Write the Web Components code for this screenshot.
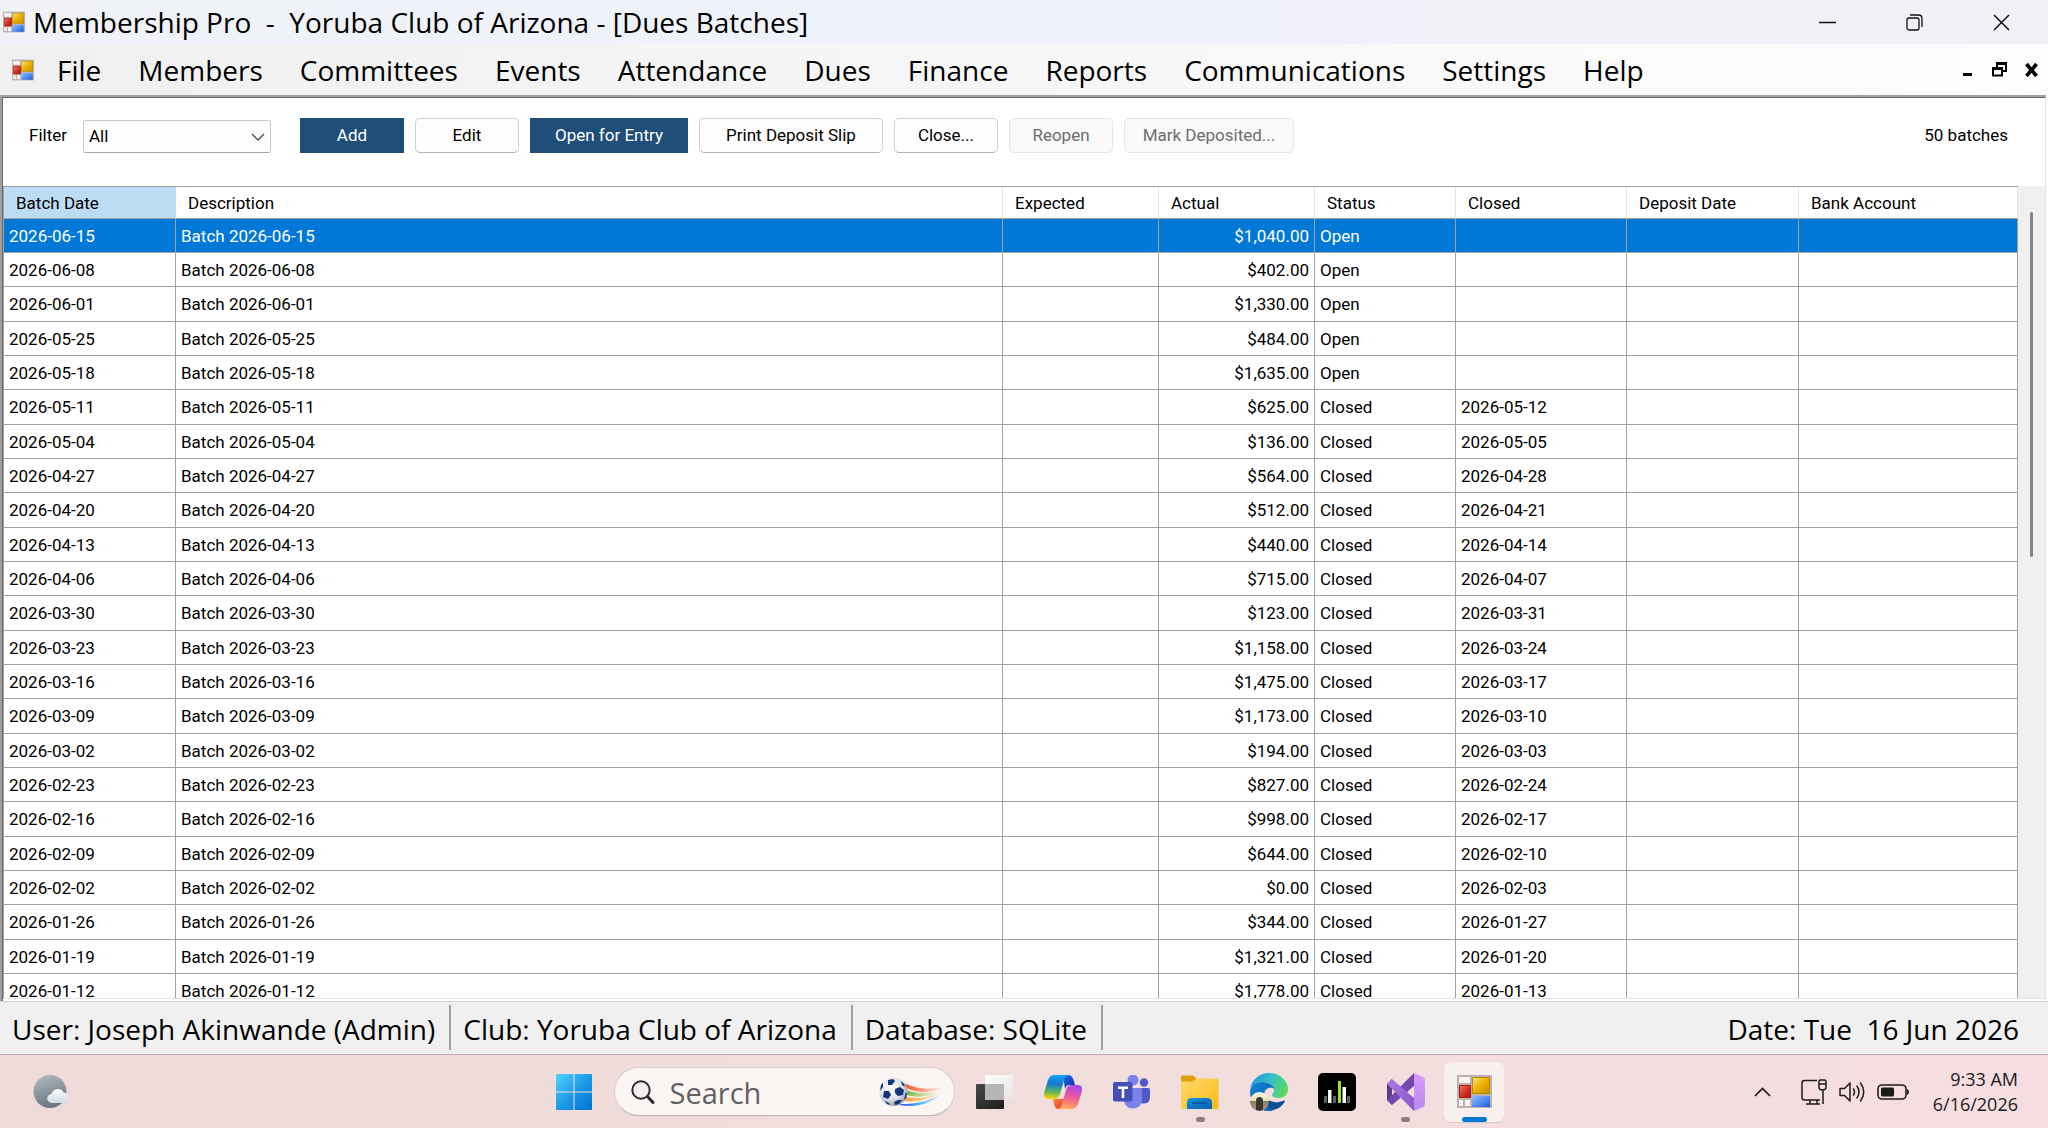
<!DOCTYPE html>
<html lang="en">
<head>
<meta charset="utf-8">
<title>Membership Pro - Dues Batches</title>
<style>
  html, body { height: 100%; margin: 0; }
  body {
    --ui: "Open Sans", "Noto Sans", sans-serif;
    --grid: "Roboto", sans-serif;
    font-family: var(--ui);
    color: #000;
    overflow: hidden;
  }
</style>
</head>
<body>
<desktop-screen>
  <title-bar>Membership Pro&nbsp; -&nbsp; Yoruba Club of Arizona - [Dues Batches]</title-bar>
  <menu-bar items="File,Members,Committees,Events,Attendance,Dues,Finance,Reports,Communications,Settings,Help"></menu-bar>
  <mdi-child>
    <batch-toolbar slot="toolbar" count="50"></batch-toolbar>
    <batch-grid></batch-grid>
  </mdi-child>
  <status-bar>
    <span>User: Joseph Akinwande (Admin)</span>
    <span>Club: Yoruba Club of Arizona</span>
    <span>Database: SQLite</span>
    <span slot="end">Date: Tue&nbsp; 16 Jun 2026</span>
  </status-bar>
  <task-bar></task-bar>
</desktop-screen>

<script>
const BATCHES = [
  ['2026-06-15', '$1,040.00', 'Open', ''],
  ['2026-06-08', '$402.00', 'Open', ''],
  ['2026-06-01', '$1,330.00', 'Open', ''],
  ['2026-05-25', '$484.00', 'Open', ''],
  ['2026-05-18', '$1,635.00', 'Open', ''],
  ['2026-05-11', '$625.00', 'Closed', '2026-05-12'],
  ['2026-05-04', '$136.00', 'Closed', '2026-05-05'],
  ['2026-04-27', '$564.00', 'Closed', '2026-04-28'],
  ['2026-04-20', '$512.00', 'Closed', '2026-04-21'],
  ['2026-04-13', '$440.00', 'Closed', '2026-04-14'],
  ['2026-04-06', '$715.00', 'Closed', '2026-04-07'],
  ['2026-03-30', '$123.00', 'Closed', '2026-03-31'],
  ['2026-03-23', '$1,158.00', 'Closed', '2026-03-24'],
  ['2026-03-16', '$1,475.00', 'Closed', '2026-03-17'],
  ['2026-03-09', '$1,173.00', 'Closed', '2026-03-10'],
  ['2026-03-02', '$194.00', 'Closed', '2026-03-03'],
  ['2026-02-23', '$827.00', 'Closed', '2026-02-24'],
  ['2026-02-16', '$998.00', 'Closed', '2026-02-17'],
  ['2026-02-09', '$644.00', 'Closed', '2026-02-10'],
  ['2026-02-02', '$0.00', 'Closed', '2026-02-03'],
  ['2026-01-26', '$344.00', 'Closed', '2026-01-27'],
  ['2026-01-19', '$1,321.00', 'Closed', '2026-01-20'],
  ['2026-01-12', '$1,778.00', 'Closed', '2026-01-13'],
];

// every element renders once from a string
class BaseElement extends HTMLElement {
  constructor() {
    super();
    this.attachShadow({ mode: 'open' });
  }
  connectedCallback() {
    if (this.rendered) return;
    const template = document.createElement('template');
    template.innerHTML = this.render();
    this.shadowRoot.appendChild(template.content.cloneNode(true));
    this.rendered = true;
  }
}

class DesktopScreen extends BaseElement {
  render() {
    return `<style>
      :host { display: flex; flex-direction: column; height: 100vh; }
      ::slotted(mdi-child) { flex: 1; min-height: 0; }
    </style><slot></slot>`;
  }
}

// all icons live here, sized by the width/height of the host
const ICONS = {
  forms: `<svg viewBox="0 0 35 33">
    <defs>
      <linearGradient id="y" x1="0" y1="0" x2="1" y2="1"><stop offset="0" stop-color="#fbe98a"/><stop offset=".5" stop-color="#eeb000"/><stop offset="1" stop-color="#c98c00"/></linearGradient>
      <linearGradient id="r" x1="0" y1="0" x2="1" y2="1"><stop offset="0" stop-color="#f0806e"/><stop offset=".6" stop-color="#cc2a1c"/><stop offset="1" stop-color="#a31812"/></linearGradient>
      <linearGradient id="b" x1="0" y1="0" x2="1" y2="1"><stop offset="0" stop-color="#94bcff"/><stop offset=".6" stop-color="#4a86f2"/><stop offset="1" stop-color="#2258c8"/></linearGradient>
    </defs>
    <path d="M0 0h35v33H0z" fill="#b8b2b2"/>
    <path d="M2 2h11v6H2zM2 25h4v6H2zM8 25h5v6H8z" fill="#fbf3f2"/>
    <path d="M2 10h12v13H2z" fill="url(#r)"/><path d="M2.500 10.500h11v12h-11z" fill="none" stroke="#b01c12"/>
    <path d="M15 2h18v17H15z" fill="url(#y)"/><path d="M15.500 2.500h17v16h-17z" fill="none" stroke="#b98700"/>
    <path d="M15 21h18v11H15z" fill="url(#b)"/>
  </svg>`,
  weather: `<svg viewBox="0 0 36 33">
    <defs><linearGradient id="m" x1="0" y1="0" x2=".3" y2="1"><stop offset="0" stop-color="#b4bcc4"/><stop offset="1" stop-color="#6d7881"/></linearGradient>
    <linearGradient id="c" x1="0" y1="0" x2="0" y2="1"><stop offset="0" stop-color="#fff"/><stop offset="1" stop-color="#cfd8e2"/></linearGradient></defs>
    <ellipse cx="17" cy="16.500" rx="16.500" ry="16.500" fill="url(#m)"/>
    <path d="M19 28a4.500 4.500 0 0 1-.5-9 6.500 6.500 0 0 1 12-1.500A5.300 5.300 0 0 1 31 28z" fill="url(#c)"/>
  </svg>`,
  start: `<svg viewBox="0 0 36 36">
    <defs><linearGradient id="w" x1="0" y1="0" x2="36" y2="36" gradientUnits="userSpaceOnUse"><stop offset="0" stop-color="#52d3ff"/><stop offset=".5" stop-color="#1d9ce6"/><stop offset="1" stop-color="#0070d0"/></linearGradient></defs>
    <path d="M1 0h16.500v17.500H0V1a1 1 0 0 1 1-1zM18.500 0H35a1 1 0 0 1 1 1v16.500H18.500zM0 18.500h17.500V36H1a1 1 0 0 1-1-1zM18.500 18.500H36V35a1 1 0 0 1-1 1H18.500z" fill="url(#w)"/>
  </svg>`,
  search: `<svg viewBox="0 0 24 24" fill="none" stroke="#2b2b2b" stroke-linecap="round">
    <circle cx="10" cy="10" r="8.700" stroke-width="2" fill="#f0eeee"/><path d="M16.500 16.500l5.500 6" stroke-width="3"/>
  </svg>`,
  ball: `<svg viewBox="0 0 66 28">
    <defs>
      <radialGradient id="s" cx=".4" cy=".35" r=".7"><stop offset="0" stop-color="#fff"/><stop offset=".6" stop-color="#dcdfe4"/><stop offset="1" stop-color="#8d95a3"/></radialGradient>
      <linearGradient id="t1"><stop offset="0" stop-color="#f4511e"/><stop offset="1" stop-color="#f4511e" stop-opacity="0"/></linearGradient>
      <linearGradient id="t2"><stop offset="0" stop-color="#6cb33f"/><stop offset="1" stop-color="#b8dc5a" stop-opacity="0"/></linearGradient>
      <linearGradient id="t3"><stop offset="0" stop-color="#ff9d3c"/><stop offset="1" stop-color="#ffb74d" stop-opacity="0"/></linearGradient>
      <linearGradient id="t4"><stop offset="0" stop-color="#3949db"/><stop offset=".5" stop-color="#4ab8f5"/><stop offset="1" stop-color="#4fc3f7" stop-opacity="0"/></linearGradient>
    </defs>
    <path d="M25 5c12 6 24 7 40 4-14 7-26 6-38 1z" fill="url(#t1)"/>
    <path d="M27 12c12 4 24 4 36 0-12 7-24 8-35 5z" fill="url(#t2)"/>
    <path d="M27 19c14 2 25 0 37-7-11 9-23 13-38 11z" fill="url(#t3)"/>
    <path d="M22 26c16 0 28-2 42-12-12 12-26 16-44 13z" fill="url(#t4)"/>
    <circle cx="14.500" cy="14" r="14" fill="url(#s)"/>
    <path d="M16 11l5-2 4 3-1 5-5 1-3-3zM5 13l5 0 2 4-3 4-5-2zM9 2l5-1 2 2-3 4-4 0zM2 7l2-2 0 4-3 4zM15 24l4-2 4 0-3 4-4 1zM22 3l3 3 1 3-3-2zM27 14l1 2-1 4-2 2zM6 23l4 2 1 2-3-1z" fill="#12357a"/>
  </svg>`,
  taskview: `<svg viewBox="0 0 38 34">
    <defs><linearGradient id="d" x1="0" y1="0" x2="1" y2="1"><stop offset="0" stop-color="#484848"/><stop offset="1" stop-color="#1c1c1c"/></linearGradient>
    <linearGradient id="e" x1="0" y1="0" x2="1" y2="1"><stop offset="0" stop-color="#fff"/><stop offset="1" stop-color="#e6e3e3"/></linearGradient></defs>
    <rect y="9" width="28" height="25" rx="1" fill="url(#d)"/><rect x="9" width="28" height="25" rx="1" fill="url(#e)"/><path d="M9 9h19v16H9z" fill="#b5b5b5"/>
  </svg>`,
  copilot: `<svg viewBox="0 0 38 34">
    <defs>
      <linearGradient id="p1" x1=".4" y1="0" x2=".3" y2="1"><stop offset="0" stop-color="#11a5f0"/><stop offset=".35" stop-color="#1478d6"/><stop offset=".65" stop-color="#48b06a"/><stop offset="1" stop-color="#ffd400"/></linearGradient>
      <linearGradient id="p2" x1=".6" y1="0" x2=".4" y2="1"><stop offset="0" stop-color="#a54be8"/><stop offset=".5" stop-color="#f0589a"/><stop offset="1" stop-color="#ffac5c"/></linearGradient>
      <linearGradient id="p3" x1="0" y1="0" x2="1" y2="1"><stop offset="0" stop-color="#1b6fe0"/><stop offset="1" stop-color="#0a2fae"/></linearGradient>
      <linearGradient id="p4" x1="0" y1="0" x2="1" y2="1"><stop offset="0" stop-color="#ff8a3c"/><stop offset="1" stop-color="#e8352c"/></linearGradient>
    </defs>
    <path d="M19 0h5q4 0 5.500 5l1.500 5h-5q-4 0-5 4z" fill="url(#p3)"/>
    <path d="M9 24h11l-2 6q-1 4-4 4-3 0-4-5z" fill="url(#p4)"/>
    <path d="M10 0h14q-3 1-4 5l-4 14q-1.500 5-6 5H4q-5 0-4-6L4 5q2-5 6-5z" fill="url(#p1)"/>
    <path d="M28 34H14q3-1 4-5l4-14q1.500-5 6-5h6q5 0 4 6l-4 13q-2 5-6 5z" fill="url(#p2)"/>
  </svg>`,
  teams: `<svg viewBox="0 0 38 34">
    <circle cx="20" cy="5" r="5.500" fill="#7b83eb"/><circle cx="31" cy="7.500" r="4.200" fill="#5059c9"/>
    <path d="M27 13h8.500q1.500 0 1.500 1.500V22q0 6.500-6 6.500-4 0-5-2z" fill="#5059c9"/>
    <path d="M11 13h16q2 0 2 2v9q0 9-9 9.500-7 0-9-7z" fill="#7b83eb"/>
    <rect y="7" width="19.500" height="19.500" rx="2" fill="#464eb8"/><path d="M5 11.500h10V14h-3.700v9H8.700v-9H5z" fill="#fff"/>
  </svg>`,
  folder: `<svg viewBox="0 0 38 34">
    <defs><linearGradient id="f" x1="0" y1="0" x2="1" y2="1"><stop offset="0" stop-color="#ffdb6e"/><stop offset="1" stop-color="#fbb914"/></linearGradient>
    <linearGradient id="g" x1="0" y1="0" x2="1" y2="1"><stop offset="0" stop-color="#1590dc"/><stop offset="1" stop-color="#0562b0"/></linearGradient></defs>
    <path d="M0 2q0-1.500 1.500-1.500H12l4 3.500-4 4H0z" fill="#e0a005"/>
    <path d="M0 6.500h11.500L16 3.500h20q1.500 0 1.500 1.500v27.500Q37.500 34 36 34H1.500Q0 34 0 32.500z" fill="url(#f)"/>
    <path d="M6 34v-6q0-5 5-5h15q5 0 5 5v6z" fill="url(#g)"/><path d="M11.500 28h14" stroke="#043f78" stroke-width="1.200" stroke-linecap="round"/>
  </svg>`,
  edge: `<svg viewBox="0 0 38 38">
    <defs>
      <linearGradient id="e1" x1="0" y1=".3" x2="1" y2=".6"><stop offset="0" stop-color="#1c9ad8"/><stop offset=".5" stop-color="#35c1c8"/><stop offset="1" stop-color="#5fdc5a"/></linearGradient>
      <linearGradient id="e2" x1="0" y1="0" x2="1" y2="1"><stop offset="0" stop-color="#1284d6"/><stop offset="1" stop-color="#0b5aa8"/></linearGradient>
      <linearGradient id="e3" x1="0" y1="0" x2="0" y2="1"><stop offset="0" stop-color="#fffbe0"/><stop offset=".45" stop-color="#e8dfb8"/><stop offset=".5" stop-color="#8f7f60"/><stop offset="1" stop-color="#a89a86"/></linearGradient>
    </defs>
    <path d="M0 16C2 6 10 0 19 0c11 0 19 8 19 16 0 6-4 9-9 9-4 0-7-1-7-3 0-1 2-2 2-5 0-4-5-8-11-8-7 0-12 4-13 7z" fill="url(#e1)"/>
    <path d="M0 18c1-6 6-9 12-9 7 0 12 4 12 7-3-3-10-1-10 6 0 7 6 12 14 12-3 3-6 4-9 4C8 38 0 30 0 18z" fill="url(#e2)"/>
    <path d="M15 20c0 7 7 10 14 9 3-.5 5-1.500 6-1 0 1-3 5-7 7.500-9 3-15-5-13-15.500z" fill="#0d4f96"/>
    <circle cx="9.500" cy="28.500" r="9.500" fill="url(#e3)"/><path d="M6 37v-9q0-4 3.500-4t3.500 4v9q-3.500 1.500-7 0z" fill="#3b3631"/>
  </svg>`,
  bars: `<svg viewBox="0 0 38 38">
    <rect width="38" height="38" rx="5" fill="#000"/>
    <path d="M6 23h3v7H6zM15 23h3v7h-3zM29 23h3v7h-3z" fill="#5e5e5e"/><path d="M10 17h3.500v13H10zM24.500 14H28v16h-3.500z" fill="#fff"/><path d="M20 8h3v22h-3z" fill="#9be22d"/>
  </svg>`,
  vs: `<svg viewBox="0 0 38 38">
    <defs><linearGradient id="v" x1="0" y1="0" x2="1" y2="1"><stop offset="0" stop-color="#b07be6"/><stop offset="1" stop-color="#8a55c9"/></linearGradient>
    <linearGradient id="v2" x1="0" y1="0" x2="0" y2="1"><stop offset="0" stop-color="#d79bff"/><stop offset="1" stop-color="#b98aee"/></linearGradient></defs>
    <path d="M0 11l5-5v26l-5-5z" fill="#5c3a86"/>
    <path d="M5 32l-5-5 22-22L27 0v13z" fill="#7448b0"/>
    <path d="M0 11l5-5 22 19v13l-5-5z" fill="url(#v)"/>
    <path d="M27 0l9 4q2 1 2 3v24q0 2-2 3l-9 4z" fill="url(#v2)"/>
  </svg>`,
  min: `<svg viewBox="0 0 17 17"><path d="M0 8.500h17" stroke="#111" stroke-width="1.500"/></svg>`,
  restore: `<svg viewBox="0 0 17 17" fill="none" stroke="#111" stroke-width="1.300"><rect x="1" y="4" width="12" height="12" rx="2"/><path d="M4 1h8.500Q16 1 16 4.500V13"/></svg>`,
  close: `<svg viewBox="0 0 17 17"><path d="M1 1l15 15M16 1L1 16" stroke="#111" stroke-width="1.500"/></svg>`,
  mdimin: `<svg viewBox="0 0 15 15"><path d="M3 11h9v3H3z"/></svg>`,
  mdirestore: `<svg viewBox="0 0 15 15"><path d="M4 0h11v10h-4v4.500H0V5h4zM6 3v2h5v3h2V3zM2 8v4.500h7V8z" fill-rule="evenodd"/></svg>`,
  mdiclose: `<svg viewBox="0 0 15 15"><path d="M2.500 2l10 12M12.500 2l-10 12" stroke="#000" stroke-width="3.600"/></svg>`,
  up: `<svg viewBox="0 0 17 10" fill="none"><path d="M1 9l7.500-7.500L16 9" stroke="#1b1b1b" stroke-width="1.700"/></svg>`,
  down: `<svg viewBox="0 0 14 8" fill="none"><path d="M1 1l6 6 6-6" stroke="#555" stroke-width="1.500"/></svg>`,
  network: `<svg viewBox="0 0 26 26" fill="none" stroke="#1b1b1b" stroke-width="1.500"><path d="M16 1.500H3.500Q1 1.500 1 4v14.500Q1 21 3.500 21H19M9 21v4M16 21v4M5 25h14M22 11v14M18 2.500Q18 1 19.500 1h4Q25 1 25 2.500V8q0 3-3.500 3T18 8zM18 5h7"/></svg>`,
  sound: `<svg viewBox="0 0 26 22" fill="none" stroke="#1b1b1b" stroke-width="1.500" stroke-linecap="round" stroke-linejoin="round"><path d="M1 7.500h4.500L11 2v18l-5.500-5.500H1zM14.500 8q2 3 0 6M18 5q4 6 0 12M21.500 2q6.500 9 0 18"/></svg>`,
  battery: `<svg viewBox="0 0 32 16" fill="none"><rect x="1" y="1" width="28" height="14" rx="4" stroke="#1b1b1b" stroke-width="1.600"/><rect x="4" y="3.500" width="13" height="9" rx="1.500" fill="#1b1b1b"/><path d="M30 5q2 1 2 3t-2 3z" fill="#1b1b1b"/></svg>`,
};

class UiIcon extends BaseElement {
  render() {
    return `<style>
      :host { display: inline-block; flex: none; }
      svg { display: block; width: 100%; height: 100%; }
    </style>${ICONS[this.getAttribute('name')]}`;
  }
}

class TitleBar extends BaseElement {
  render() {
    return `<style>
      :host { display: flex; align-items: center; height: 44px; flex: none; background: linear-gradient(90deg, #f0f2f8, #eff2fa 50%, #f4f0f7); }
      .app { width: 22px; height: 22px; margin: 0 8px 0 3px; }
      h1 { flex: 1; margin: 0; font-size: 28px; font-weight: 400; line-height: 44px; white-space: nowrap; }
      button { width: 87px; height: 42px; padding: 0; border: 0; background: none; display: grid; place-items: center; }
      button ui-icon { width: 17px; height: 17px; }
      .buttons { display: flex; margin-right: 3px; }
    </style>
    <ui-icon class="app" name="forms"></ui-icon>
    <h1><slot></slot></h1>
    <div class="buttons">
      <button aria-label="Minimize"><ui-icon name="min"></ui-icon></button>
      <button aria-label="Restore"><ui-icon name="restore"></ui-icon></button>
      <button aria-label="Close"><ui-icon name="close"></ui-icon></button>
    </div>`;
  }
}

class MenuBar extends BaseElement {
  render() {
    const items = this.getAttribute('items').split(',').map((name) => `<button>${name}</button>`).join('');
    return `<style>
      :host { display: flex; align-items: center; height: 51px; flex: none; background: linear-gradient(90deg, #f0f0f0, #fdfdfd); }
      .app { width: 22px; height: 22px; margin-left: 12px; }
      nav { display: flex; gap: 1px; flex: 1; margin-left: 5px; }
      nav button { border: 0; background: none; padding: 2px 18px 0; font: 28px/49px var(--ui); color: inherit; }
      .mdi { display: flex; margin-right: 1px; }
      .mdi button { width: 32px; height: 32px; padding: 0; border: 0; background: none; display: grid; place-items: center; }
      .mdi ui-icon { width: 15px; height: 15px; }
    </style>
    <ui-icon class="app" name="forms"></ui-icon>
    <nav>${items}</nav>
    <div class="mdi">
      <button aria-label="Minimize child"><ui-icon name="mdimin"></ui-icon></button>
      <button aria-label="Restore child"><ui-icon name="mdirestore"></ui-icon></button>
      <button aria-label="Close child"><ui-icon name="mdiclose"></ui-icon></button>
    </div>`;
  }
}

class MdiChild extends BaseElement {
  render() {
    return `<style>
      :host { display: flex; flex-direction: column; box-sizing: border-box; margin-right: 2px; border: solid #a0a0a0; border-width: 2px 0 0 2px; }
      .client { flex: 1; min-height: 0; display: flex; flex-direction: column; border: solid #696969; border-width: 1px 0 0 1px; border-right: 1px solid #e3e3e3; background: #fff; }
      ::slotted(batch-grid) { flex: 1; min-height: 0; }
    </style>
    <div class="client"><slot name="toolbar"></slot><slot></slot></div>`;
  }
}

class BatchToolbar extends BaseElement {
  render() {
    return `<style>
      :host { display: flex; align-items: flex-start; gap: 11px; padding: 20px 37px 33px 26px; font: 17px/35px var(--grid); }
      .filter { display: flex; width: 260px; height: 35px; }
      label { width: 54px; }
      .combo { display: grid; align-self: flex-end; width: 188px; height: 33px; align-items: center; }
      select, .combo ui-icon { grid-area: 1 / 1; }
      select { appearance: none; width: 100%; height: 33px; padding: 0 5px; border: 1px solid #c9c9c9; border-bottom-color: #a8a8a8; border-radius: 3px; background: #fdfdfd; font: inherit; line-height: 31px; color: #000; }
      .combo ui-icon { justify-self: end; width: 14px; height: 8px; margin-right: 6px; pointer-events: none; }
      button { box-sizing: border-box; width: 104px; height: 35px; padding: 0; border: 1px solid #d0d0d0; border-bottom-color: #b4b4b4; border-radius: 5px; background: #fdfdfd; font: inherit; line-height: 33px; color: #000; }
      .primary { border: 0; border-radius: 0; background: #1f4e79; color: #fff; line-height: 35px; }
      button:disabled { border-color: #e5e5e5; background: #f9f9f9; color: #6d6d6d; }
      .open { width: 158px; }
      .print { width: 184px; }
      .mark { width: 170px; }
      output { margin-left: auto; }
    </style>
    <div class="filter">
      <label for="filter">Filter</label>
      <div class="combo"><select id="filter"><option>All</option></select><ui-icon name="down"></ui-icon></div>
    </div>
    <button class="primary">Add</button>
    <button>Edit</button>
    <button class="primary open">Open for Entry</button>
    <button class="print">Print Deposit Slip</button>
    <button>Close...</button>
    <button disabled>Reopen</button>
    <button class="mark" disabled>Mark Deposited...</button>
    <output>${this.getAttribute('count')} batches</output>`;
  }
}

class BatchGrid extends BaseElement {
  getRows() {
    return BATCHES.map(([date, actual, status, closed], i) => `<tr${i === 0 ? ' class="selected"' : ''}>
      <td>${date}</td><td>Batch ${date}</td><td></td><td class="money">${actual}</td><td>${status}</td><td>${closed}</td><td></td><td></td>
    </tr>`).join('');
  }
  render() {
    return `<style>
      :host { display: flex; overflow: hidden; font: 17px/20px var(--grid); border-bottom: 1px solid #e3e3e3; margin-bottom: 2px; }
      .view { flex: 1; overflow: hidden; border: solid #a0a0a0; border-width: 1px 0 0 1px; }
      table { width: 100%; border-collapse: separate; border-spacing: 0; table-layout: fixed; }
      th, td { box-sizing: border-box; padding: 0 5px; text-align: left; font-weight: 400; white-space: nowrap; border-right: 1px solid #a0a0a0; border-bottom: 1px solid #a0a0a0; }
      th { height: 32px; padding: 0 12px; border-right-color: #e5e5e5; }
      th.sorted { background: #bcdcf4; border-right-color: #bcdcf4; }
      tbody tr { height: 34px; }
      /* row pitch is 34 and a third */
      tbody tr:nth-child(3n) { height: 35px; }
      .selected td { background: #0078d7; color: #fff; }
      .money { text-align: right; }
      .date { width: 172px; }
      .amount { width: 156px; }
      .status { width: 141px; }
      .closed { width: 171px; }
      .deposit { width: 172px; }
      .bank { width: 219px; }
      .scroll { width: 27px; background: #f0f0f0; display: flex; justify-content: center; align-items: flex-start; }
      .thumb { width: 3px; height: 345px; margin-top: 26px; border-radius: 2px; background: #858585; }
    </style>
    <div class="view">
      <table>
        <colgroup><col class="date"><col><col class="amount"><col class="amount"><col class="status"><col class="closed"><col class="deposit"><col class="bank"></colgroup>
        <thead><tr><th class="sorted">Batch Date</th><th>Description</th><th>Expected</th><th>Actual</th><th>Status</th><th>Closed</th><th>Deposit Date</th><th>Bank Account</th></tr></thead>
        <tbody>${this.getRows()}</tbody>
      </table>
    </div>
    <div class="scroll"><div class="thumb"></div></div>`;
  }
}

class StatusBar extends BaseElement {
  render() {
    return `<style>
      :host { display: flex; box-sizing: border-box; height: 53px; flex: none; padding: 3px 29px 4px 0; border-top: 1px solid #d4d4d4; background: #f0f0f0; font-size: 28px; line-height: 42px; white-space: nowrap; }
      ::slotted(span) { padding-top: 3px; }
      ::slotted(span:not([slot])) { padding-left: 12px; padding-right: 14px; border-right: 2px solid #a0a0a0; }
      .end { display: flex; margin-left: auto; }
    </style>
    <slot></slot><div class="end"><slot name="end"></slot></div>`;
  }
}

class TaskBar extends BaseElement {
  getApps() {
    const apps = [['taskview', 'Task View'], ['copilot', 'Copilot'], ['teams', 'Teams'], ['folder', 'File Explorer', 'running'], ['edge', 'Edge'], ['bars', 'Levels'], ['vs', 'Visual Studio', 'running'], ['forms', 'Membership Pro', 'active']];
    return apps.map(([icon, label, state = '']) => `<button class="app ${state}" aria-label="${label}"><ui-icon class="${icon}" name="${icon}"></ui-icon></button>`).join('');
  }
  render() {
    return `<style>
      :host { display: grid; grid-template-columns: 1fr auto 1fr; align-items: center; box-sizing: border-box; height: 74px; flex: none; border-top: 1px solid #b9aead; background: linear-gradient(90deg, #eedad9, #f2dedc 60%, #f6dde1); }
      button { border: 0; padding: 0; background: none; color: inherit; font: inherit; }
      .weather { justify-self: start; margin-left: 33px; }
      .weather ui-icon { display: block; width: 36px; height: 33px; }
      .center { display: flex; align-items: center; gap: 10px; }
      .app { position: relative; display: grid; place-items: center; width: 60px; height: 60px; border-radius: 6px; }
      .app ui-icon { width: 38px; height: 34px; }
      .app .start { width: 36px; height: 36px; }
      .app .edge, .app .bars, .app .vs { height: 38px; }
      .app .forms { width: 35px; height: 33px; }
      .search { display: flex; align-items: center; box-sizing: border-box; width: 341px; height: 49px; padding: 0 9px 0 16px; border: 1px solid #dfcbcb; border-bottom-color: #c4b2b2; border-radius: 25px; background: #fbf5f4; }
      .search ui-icon { width: 24px; height: 24px; }
      .search .ball { width: 66px; height: 28px; }
      input { flex: 1; min-width: 0; margin: 0 0 0 15px; padding: 2px 0 0; border: 0; outline: 0; background: none; font: 29px/40px var(--ui); }
      input::placeholder { color: #636060; opacity: 1; }
      .apps { display: flex; justify-content: space-between; width: 540px; }
      .active { background: #f9efee; box-shadow: 0 1px 1px #d9c8c7; }
      .running::after, .active::after { content: ""; position: absolute; bottom: 0; width: 9px; height: 5px; border-radius: 3px; background: #8b8080; }
      .active::after { width: 25px; background: #0078d4; }
      .tray { justify-self: end; display: flex; align-items: center; gap: 12px; padding-right: 30px; }
      .up { width: 17px; height: 10px; margin-right: 18px; }
      .network { width: 26px; height: 26px; }
      .sound { width: 26px; height: 22px; }
      .battery { width: 32px; height: 16px; }
      .clock { margin-left: 12px; text-align: right; font-size: 18px; line-height: 25px; color: #1b1b1b; }
    </style>
    <button class="weather" aria-label="Weather"><ui-icon name="weather"></ui-icon></button>
    <div class="center">
      <button class="app" aria-label="Start"><ui-icon class="start" name="start"></ui-icon></button>
      <label class="search"><ui-icon name="search"></ui-icon><input type="text" placeholder="Search" aria-label="Search"><ui-icon class="ball" name="ball"></ui-icon></label>
      <div class="apps">${this.getApps()}</div>
    </div>
    <div class="tray">
      <ui-icon class="up" name="up"></ui-icon>
      <ui-icon class="network" name="network"></ui-icon>
      <ui-icon class="sound" name="sound"></ui-icon>
      <ui-icon class="battery" name="battery"></ui-icon>
      <div class="clock"><div>9:33 AM</div><div>6/16/2026</div></div>
    </div>`;
  }
}

customElements.define('ui-icon', UiIcon);
customElements.define('desktop-screen', DesktopScreen);
customElements.define('title-bar', TitleBar);
customElements.define('menu-bar', MenuBar);
customElements.define('mdi-child', MdiChild);
customElements.define('batch-toolbar', BatchToolbar);
customElements.define('batch-grid', BatchGrid);
customElements.define('status-bar', StatusBar);
customElements.define('task-bar', TaskBar);
</script>
</body>
</html>
